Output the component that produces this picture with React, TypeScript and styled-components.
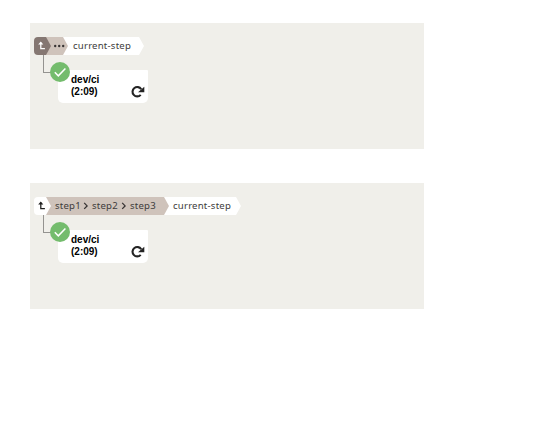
import React from "react";
import styled, { createGlobalStyle } from "styled-components";

const GlobalStyle = createGlobalStyle`
  * { box-sizing: border-box; }
  body { margin: 0; background: #fff; }
`;

const Page = styled.main`
  display: flex;
  flex-direction: column;
  gap: 34px;
  padding: 23px 30px;
`;

const Panel = styled.section`
  width: 394px;
  height: 126px;
  padding: 14px 4px;
  background: #f0efea;
`;

const Breadcrumb = styled.nav`
  display: flex;
  height: 18px;
  font: 9.6px/16px "Noto Sans", sans-serif;
  letter-spacing: 0.21px;
  color: #403c3c;
`;

type Tone = "dark" | "tan" | "white";

const tones: Record<Tone, string> = {
  dark: "#857772",
  tan: "#cfc3bb",
  white: "#fff",
};

const Crumb = styled.div<{ $tone: Tone; $width: number; $layer: number; $pad?: number; $first?: boolean }>`
  position: relative;
  z-index: ${(p) => p.$layer};
  display: flex;
  align-items: center;
  flex: none;
  width: ${(p) => p.$width}px;
  margin-left: ${(p) => (p.$first ? 0 : -5)}px;
  padding-left: ${(p) => p.$pad ?? 9}px;
  border-radius: ${(p) => (p.$first ? "4px 0 0 4px" : 0)};
  background: ${(p) => tones[p.$tone]};
  clip-path: polygon(0 0, calc(100% - 5px) 0, 100% 50%, calc(100% - 5px) 100%, 0 100%);
  white-space: nowrap;
`;

const StepName = styled.span<{ $width?: number }>`
  width: ${(p) => (p.$width ? `${p.$width}px` : "auto")};
`;

const Icon = styled.svg`
  display: block;
  flex: none;
`;

const StepArrow = styled(Icon)`
  margin: 0 3px 0 2px;
`;

const Tree = styled.div`
  display: flex;
  padding-left: 9px;
`;

const Connector = styled.div`
  width: 15px;
  height: 18px;
  border: solid #949390;
  border-width: 0 0 1px 1px;
`;

const Job = styled.article`
  position: relative;
  display: flex;
  justify-content: space-between;
  align-items: flex-end;
  width: 90px;
  height: 33px;
  margin-top: 15px;
  padding: 0 3px 5px 13px;
  border-radius: 4px 1px 5px 5px;
  background: #fff;
`;

const StatusBadge = styled.span`
  position: absolute;
  top: -8px;
  left: -8px;
`;

const JobText = styled.div`
  font: bold 10px/12px "Liberation Sans", Arial, sans-serif;
  color: #000;
`;

const UpIcon = ({ color }: { color: string }) => (
  <Icon width="10" height="12" viewBox="0 0 10 12" fill="none">
    <path d="M4.8 2.5v6.1H8.9" stroke={color} strokeWidth="1.25" />
    <path d="M2.2 4.5 4.8 1.5l2.5 3z" fill={color} />
  </Icon>
);

const DotsIcon = () => (
  <Icon width="13" height="4" viewBox="0 0 13 4" fill="#383434">
    <circle cx="2.2" cy="2" r="1.2" />
    <circle cx="6.2" cy="2" r="1.2" />
    <circle cx="10.2" cy="2" r="1.2" />
  </Icon>
);

const Chevron = () => (
  <StepArrow width="7" height="8" viewBox="0 0 7 8" fill="none">
    <path d="M2.2.9 5.1 3.9 2.2 6.9" stroke="#383434" strokeWidth="1.3" />
  </StepArrow>
);

const CheckIcon = () => (
  <Icon width="20" height="20" viewBox="0 0 20 20" fill="none">
    <circle cx="10" cy="10" r="10" fill="#74bc6d" />
    <path d="m4.8 10.2 3.5 3.6 7.1-7.3" stroke="#fff" strokeWidth="1.5" />
  </Icon>
);

const RerunIcon = () => (
  <Icon width="14" height="13" viewBox="0 0 14 13" fill="none">
    <path d="M10.2 4.2A4.7 4.7 0 1 0 9.7 9.9" stroke="#242424" strokeWidth="2.1" />
    <path d="M13.3 1.8v5.5H7z" fill="#242424" />
  </Icon>
);

const JobTree = () => (
  <Tree>
    <Connector />
    <Job>
      <StatusBadge>
        <CheckIcon />
      </StatusBadge>
      <JobText>
        dev/ci
        <br />
        (2:09)
      </JobText>
      <RerunIcon />
    </Job>
  </Tree>
);

export default function App() {
  return (
    <>
      <GlobalStyle />
      <Page>
        <Panel>
          <Breadcrumb>
            <Crumb $tone="dark" $width={17} $layer={3} $pad={2} $first>
              <UpIcon color="#fff" />
            </Crumb>
            <Crumb $tone="tan" $width={22} $layer={2} $pad={7}>
              <DotsIcon />
            </Crumb>
            <Crumb $tone="white" $width={81} $layer={1} $pad={10}>
              <StepName>current-step</StepName>
            </Crumb>
          </Breadcrumb>
          <JobTree />
        </Panel>
        <Panel>
          <Breadcrumb>
            <Crumb $tone="white" $width={17} $layer={3} $pad={2} $first>
              <UpIcon color="#1e1e1e" />
            </Crumb>
            <Crumb $tone="tan" $width={123} $layer={2}>
              <StepName $width={25}>step1</StepName>
              <Chevron />
              <StepName $width={26}>step2</StepName>
              <Chevron />
              <StepName>step3</StepName>
            </Crumb>
            <Crumb $tone="white" $width={77} $layer={1}>
              <StepName>current-step</StepName>
            </Crumb>
          </Breadcrumb>
          <JobTree />
        </Panel>
      </Page>
    </>
  );
}
